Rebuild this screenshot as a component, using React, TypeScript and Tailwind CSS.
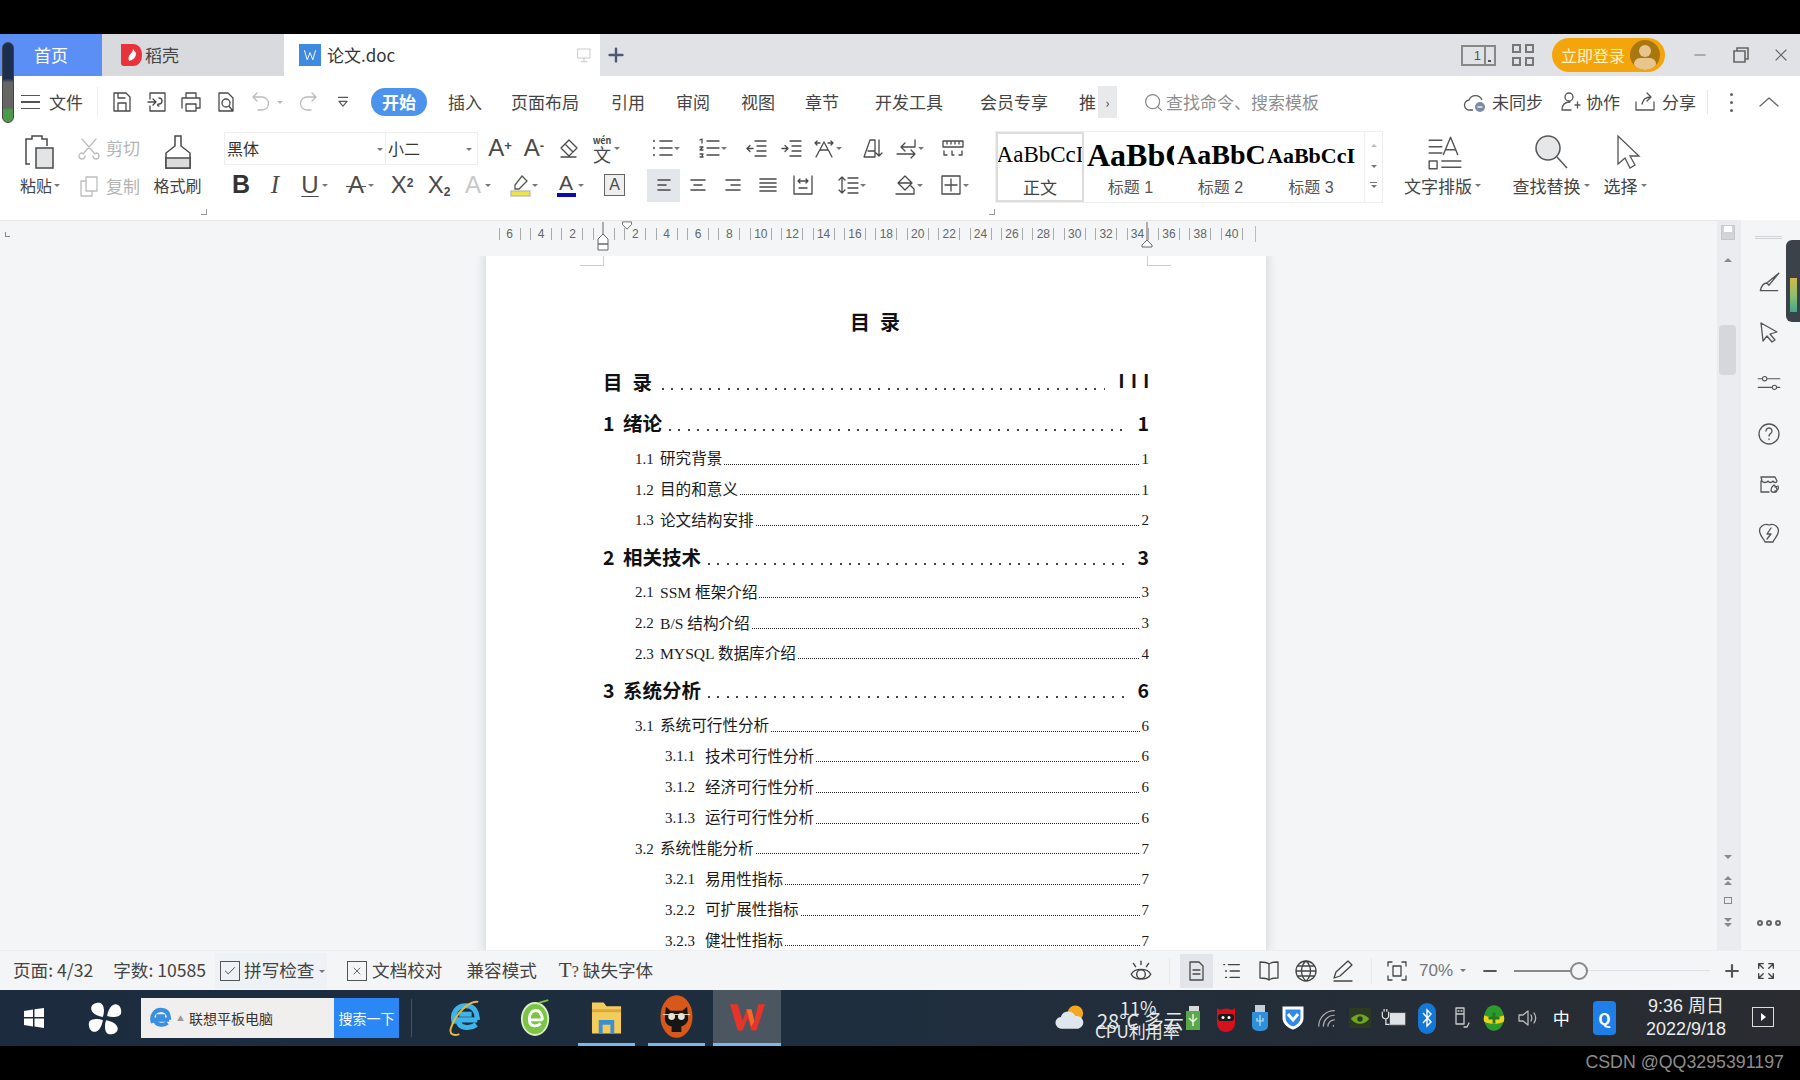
import React from 'react';
import { Check, Minus, Plus, Search, X } from 'lucide-react';

// generic thin stroke icon, 24 box unless sized by class
function Ic({ d, className = 'w-6 h-6 text-[#4a4a4a]', sw = 1.3, children }: { d?: string; className?: string; sw?: number; children?: React.ReactNode }) {
  return (
    <svg viewBox="0 0 24 24" fill="none" stroke="currentColor" strokeWidth={sw} strokeLinecap="round" strokeLinejoin="round" className={className}>
      {d && <path d={d} />}
      {children}
    </svg>
  );
}

function Caret({ className = '' }: { className?: string }) {
  return <span className={`absolute w-0 h-0 border-x-[3px] border-x-transparent border-t-[3px] border-t-[#777] ${className}`} />;
}

// 24px wide slot in a ribbon row
function Tool({ className = '', caret, children }: { className?: string; caret?: boolean; children: React.ReactNode }) {
  return (
    <div className={`relative w-6 h-8 shrink-0 flex items-center justify-center text-[#4a4a4a] ${className}`}>
      {children}
      {caret && <Caret className="-right-[6px] top-[15px]" />}
    </div>
  );
}

const menu = [
  ['插入', 'ml-[21px]'],
  ['页面布局', 'ml-[29px]'],
  ['引用', 'ml-[32px]'],
  ['审阅', 'ml-[31px]'],
  ['视图', 'ml-[31px]'],
  ['章节', 'ml-[30px]'],
  ['开发工具', 'ml-[36px]'],
  ['会员专享', 'ml-[37px]'],
];

const toc = [
  { l: 1, n: '1', t: '绪论', p: '1' },
  { l: 2, n: '1.1', t: '研究背景', p: '1' },
  { l: 2, n: '1.2', t: '目的和意义', p: '1' },
  { l: 2, n: '1.3', t: '论文结构安排', p: '2' },
  { l: 1, n: '2', t: '相关技术', p: '3' },
  { l: 2, n: '2.1', t: 'SSM 框架介绍', p: '3' },
  { l: 2, n: '2.2', t: 'B/S 结构介绍', p: '3' },
  { l: 2, n: '2.3', t: 'MYSQL 数据库介绍', p: '4' },
  { l: 1, n: '3', t: '系统分析', p: '6' },
  { l: 2, n: '3.1', t: '系统可行性分析', p: '6' },
  { l: 3, n: '3.1.1', t: '技术可行性分析', p: '6' },
  { l: 3, n: '3.1.2', t: '经济可行性分析', p: '6' },
  { l: 3, n: '3.1.3', t: '运行可行性分析', p: '6' },
  { l: 2, n: '3.2', t: '系统性能分析', p: '7' },
  { l: 3, n: '3.2.1', t: '易用性指标', p: '7' },
  { l: 3, n: '3.2.2', t: '可扩展性指标', p: '7' },
  { l: 3, n: '3.2.3', t: '健壮性指标', p: '7' },
];

const rulerNums = ['6', '4', '2', '', '2', '4', '6', '8', '10', '12', '14', '16', '18', '20', '22', '24', '26', '28', '30', '32', '34', '36', '38', '40'];

function TocRow({ l, n, t, p }: { l: number; n: string; t: string; p: string }) {
  if (l === 1) {
    return (
      <div className="h-[41.4px] flex items-center text-[19.5px] font-bold text-[#111]">
        <span className="w-[20px]">{n}</span>
        <span>{t}</span>
        <div className="flex-1 h-[2px] mt-[14px] mx-[7px] bg-[repeating-linear-gradient(90deg,#444_0_2px,transparent_2px_9.4px)]" />
        <span className="ml-[6px]">{p}</span>
      </div>
    );
  }
  return (
    <div className={`h-[30.7px] flex items-center text-[15.6px] text-[#1a1a1a] ${l === 2 ? 'pl-[32px]' : 'pl-[62px]'}`}>
      <span className={`font-['Liberation_Serif',serif] text-[15px] ${l === 2 ? 'w-[25px]' : 'w-[40px]'}`}>{n}</span>
      <span className="font-['Liberation_Serif','Noto_Sans_CJK_SC',serif]">{t}</span>
      <div className="flex-1 h-[1px] mt-[10px] mx-[2px] bg-[repeating-linear-gradient(90deg,#222_0_1px,transparent_1px_2px)]" />
      <span className="font-['Liberation_Serif',serif] text-[15px]">{p}</span>
    </div>
  );
}

function TabBar() {
  return (
    <div className="h-[42px] flex bg-[#e0e2e5] text-[17px]">
      <div className="w-[102px] flex items-center justify-center bg-[#5c8ff5] text-white">首页</div>
      <div className="w-[182px] flex items-center pl-[17px] bg-[#d8dadd] text-[#444]">
        <svg viewBox="0 0 24 24" className="w-[24px] h-[24px] mr-[2px]">
          <path d="M2 1h12c6 0 9 5 9 11s-3 11-9 11H5c-2 0-3-1-3-3z" fill="#e8333c" />
          <path d="M14 6c0 5-6 5-4 12 4-1 7-3 7-8z" fill="#fff" />
        </svg>
        稻壳
      </div>
      <div className="w-[316px] flex items-center pl-[15px] pr-[7px] bg-white text-[#333]">
        <div className="w-[22px] h-[22px] bg-[#3e8ae0] flex items-center justify-center mr-[6px]">
          <svg viewBox="0 0 20 20" className="w-4 h-4" fill="none" stroke="#fff" strokeWidth="1.2">
            <path d="M3 4l3.5 12L10 7l3.5 9L17 4" />
          </svg>
        </div>
        论文.doc
        <div className="ml-auto">
          <Ic className="w-[18px] h-[18px] text-[#c8c8c8]" d="M4 4h16v12H4zM12 16v5M8 21h8" />
        </div>
      </div>
      <Plus className="w-[22px] h-[22px] text-[#4c5a70] ml-[5px] mt-[10px]" strokeWidth={2.6} />
      <div className="ml-auto flex items-center">
        <div className="w-[35px] h-[21px] border-2 border-[#888] flex items-center justify-end pr-[1px] text-[13px] text-[#555] leading-none font-['Liberation_Sans',sans-serif]">
          1
          <span className="ml-[3px] w-[9px] h-[17px] border-l-2 border-[#888] flex items-end justify-center pb-[2px]">
            <span className="w-[3px] h-[2px] bg-[#555]" />
          </span>
        </div>
        <div className="ml-[16px] grid grid-cols-2 gap-[4px]">
          <span className="w-[9px] h-[9px] border-2 border-[#777]" />
          <span className="w-[9px] h-[9px] border-2 border-[#777]" />
          <span className="w-[9px] h-[9px] border-2 border-[#777]" />
          <span className="w-[9px] h-[9px] border-2 border-[#777]" />
        </div>
        <div className="ml-[18px] w-[113px] h-[34px] rounded-full bg-[#f5a50c] flex items-center pl-[9px] text-[#fff3c9] text-[16px]">
          立即登录
          <div className="ml-[5px] w-[30px] h-[30px] rounded-full bg-[#a8770f] overflow-hidden flex flex-col items-center">
            <span className="mt-[5px] w-[12px] h-[12px] rounded-full bg-[#e8c58c]" />
            <span className="mt-[1px] w-[22px] h-[12px] rounded-full bg-[#e8c58c]" />
          </div>
        </div>
        <Minus className="ml-[26px] w-[18px] h-[18px] text-[#777]" strokeWidth={1.4} />
        <svg viewBox="0 0 18 18" className="ml-[23px] w-[18px] h-[18px]" fill="none" stroke="#666" strokeWidth="1.6">
          <path d="M5 5V2h11v11h-3" />
          <path d="M2 5h11v11H2z" />
        </svg>
        <X className="ml-[21px] mr-[9px] w-[20px] h-[20px] text-[#666]" strokeWidth={1.4} />
      </div>
    </div>
  );
}

function MenuRow() {
  return (
    <div className="h-[52px] bg-white flex items-center text-[17px] text-[#444] pl-[21px]">
      <div className="flex flex-col gap-[5px] w-[19px]">
        <span className="h-[1.5px] bg-[#555]" />
        <span className="h-[1.5px] bg-[#555]" />
        <span className="h-[1.5px] bg-[#555]" />
      </div>
      <span className="ml-[9px]">文件</span>
      <span className="ml-[14px] w-px h-[30px] bg-[#eee]" />
      <Ic className="ml-[12px] w-6 h-6 text-[#4a4a4a]" d="M4 3h12l4 4v14H4zM8 21v-8h8v8M8 3v5h7" />
      <Ic className="ml-[11px] w-6 h-6 text-[#4a4a4a]" d="M5 9V3h15v18H5v-5M3 12h8M8 9l3 3-3 3M14 8a3 3 0 0 1 0 6c-2 0-2 2 0 2" />
      <Ic className="ml-[10px] w-6 h-6 text-[#4a4a4a]" d="M7 8V3h10v5M3 18V8h18v10h-4M7 14h10v7H7z" />
      <Ic className="ml-[11px] w-6 h-6 text-[#4a4a4a]" d="M5 3h9l5 5v13H5zM12 9a4 4 0 1 0 0 8 4 4 0 0 0 0-8M15 16l3 4" />
      <Ic className="ml-[11px] w-6 h-6 text-[#bbb]" d="M8 3L4 7l4 4M4 7h9a6 6 0 0 1 0 13H9" />
      <span className="ml-[4px] w-0 h-0 border-x-[3px] border-x-transparent border-t-[3px] border-t-[#bbb]" />
      <Ic className="ml-[13px] w-6 h-6 text-[#bbb]" d="M16 3l4 4-4 4M20 7h-9a6 6 0 0 0 0 13h4" />
      <Ic className="ml-[16px] w-[14px] h-[14px] text-[#555]" sw={2} d="M4 4h16M5 11l7 8 7-8z" />
      <span className="ml-[21px] w-[56px] h-[28px] rounded-full bg-[#4c93ee] text-white font-bold flex items-center justify-center">开始</span>
      {menu.map(([t, ml]) => (
        <span key={t} className={ml}>{t}</span>
      ))}
      <span className="ml-[31px] w-[19px] overflow-hidden whitespace-nowrap">推</span>
      <span className="w-[19px] h-[32px] bg-[#e8e9ea] flex items-center justify-center text-[13px] leading-none">›</span>
      <Search className="ml-[26px] w-[21px] h-[21px] text-[#888]" strokeWidth={1.4} />
      <span className="ml-[2px] text-[#8e8e8e]">查找命令、搜索模板</span>
      <div className="ml-auto flex items-center pr-[19px]">
        <svg viewBox="0 0 24 24" className="w-[24px] h-[24px]" fill="none" stroke="#555" strokeWidth="1.3">
          <path d="M10 20H7a5 5 0 0 1-1-10 7 7 0 0 1 13 0" />
          <circle cx="17" cy="17" r="5" fill="#7d8aa3" stroke="none" />
          <path d="M14.5 17h5" stroke="#fff" />
        </svg>
        <span className="ml-[5px]">未同步</span>
        <Ic className="ml-[15px] w-6 h-6 text-[#555]" d="M11 3a4 4 0 1 0 0 8 4 4 0 0 0 0-8M4 20c0-5 3-8 8-8M4 20h9M17 15h5M19.5 12v6" />
        <span className="ml-[4px]">协作</span>
        <Ic className="ml-[13px] w-6 h-6 text-[#555]" d="M3 12v8h18v-8M9 14c1-5 4-7 9-7M14 3l4 4-4 4" />
        <span className="ml-[5px]">分享</span>
        <span className="ml-[11px] w-px h-[24px] bg-[#e5e5e5]" />
        <div className="ml-[22px] flex flex-col gap-[5px]">
          <span className="w-[3px] h-[3px] rounded-full bg-[#666]" />
          <span className="w-[3px] h-[3px] rounded-full bg-[#666]" />
          <span className="w-[3px] h-[3px] rounded-full bg-[#666]" />
        </div>
        <Ic className="ml-[24px] w-[24px] h-[24px] text-[#666]" d="M3 16l9-8 9 8" />
      </div>
    </div>
  );
}

function Ribbon() {
  return (
    <div className="h-[92px] bg-white flex text-[#444] text-[17px] relative">
      {/* clipboard */}
      <div className="w-[75px] flex flex-col items-center pl-[5px]">
        <svg viewBox="0 0 32 36" className="w-[32px] h-[36px] mt-[6px]" fill="none" stroke="#4a4a4a" strokeWidth="1.5">
          <path d="M6 30H2V5h6V2h10v3h5v7" />
          <rect x="12" y="14" width="17" height="20" fill="#e3e4e6" />
        </svg>
        <span className="mt-[3px] text-[16px] relative pr-[8px] leading-[24px]">粘贴<Caret className="right-0 top-[11px]" /></span>
      </div>
      <div className="w-[75px] flex flex-col text-[#b4b4b4] text-[17px]">
        <div className="flex items-center mt-[4px] h-[32px] pl-[2px]">
          <Ic className="w-[24px] h-[24px] text-[#bdbdbd]" d="M5 3l13 15M19 3L6 18M5 17a3 3 0 1 0 3 3M19 17a3 3 0 1 1-3 3" />
          <span className="ml-[5px]">剪切</span>
        </div>
        <div className="flex items-center mt-[6px] h-[32px] pl-[2px]">
          <Ic className="w-[24px] h-[24px] text-[#bdbdbd]" d="M9 3h11v14H9zM9 7H4v15h11v-5" />
          <span className="ml-[5px]">复制</span>
        </div>
      </div>
      <div className="w-[55px] flex flex-col items-center relative">
        <svg viewBox="0 0 30 36" className="w-[30px] h-[36px] mt-[6px]" fill="none" stroke="#4a4a4a" strokeWidth="1.5">
          <path d="M12 2h6v10l9 7v15H3V19l9-7z" />
          <path d="M3 24h24v10H3z" fill="#dcdcdc" />
        </svg>
        <span className="mt-[3px] text-[16px] leading-[24px]">格式刷</span>
        <span className="absolute right-[-2px] bottom-[5px] w-[6px] h-[6px] border-r border-b border-[#999]" />
      </div>
      {/* font + paragraph */}
      <div className="ml-[19px] w-[770px] flex flex-col relative">
        <div className="flex h-[34px] mt-[3px] items-center">
          <div className="w-[162px] h-[33px] border border-[#eee] flex items-center pl-[2px] text-[16px] text-[#333] relative">
            黑体<Caret className="right-[2px] top-[15px]" />
          </div>
          <div className="w-[92px] h-[33px] border border-l-0 border-[#eee] flex items-center pl-[2px] text-[16px] text-[#333] relative">
            小二<Caret className="right-[5px] top-[15px]" />
          </div>
          <Tool className="ml-[10px] text-[24px] font-['Liberation_Sans',sans-serif]"><span>A<sup className="text-[13px] font-bold">+</sup></span></Tool>
          <Tool className="ml-[10px] text-[24px] font-['Liberation_Sans',sans-serif]"><span>A<sup className="text-[13px] font-bold">-</sup></span></Tool>
          <Tool className="ml-[10px]"><Ic d="M13 4l8 8-8 8-8-8zM9 8l8 8M5 21h15" /></Tool>
          <Tool className="ml-[10px]" caret><span className="flex flex-col items-center leading-none pt-[3px]"><span className="text-[9px] font-bold">wén</span><span className="text-[18px]">文</span></span></Tool>
          <Tool className="ml-[36px]" caret><Ic d="M10 5h12M10 12h12M10 19h12M4 4.5v1M4 11.5v1M4 18.5v1" sw={1.6} /></Tool>
          <Tool className="ml-[23px]" caret><Ic d="M10 5h12M10 12h12M10 19h12M3 4l2-1v4M3 11h3l-3 3h3M3 18h3l-1 2 1 1H3" sw={1.3} /></Tool>
          <Tool className="ml-[24px]"><Ic d="M10 5h11M12 10h9M12 15h9M10 20h11M8 12.5H2M5 9.5l-3 3 3 3" /></Tool>
          <Tool className="ml-[11px]"><Ic d="M10 5h11M12 10h9M12 15h9M10 20h11M2 12.5h6M5 9.5l3 3-3 3" /></Tool>
          <Tool className="ml-[8px]" caret><Ic d="M12 6L4 21M12 6l8 15M8 14h8M3 7h5M3 7l2-2M3 7l2 2M21 7h-5M21 7l-2-2M21 7l-2 2" /></Tool>
          <Tool className="ml-[24px]"><Ic d="M10 4L4 21h11V4zM8 15h7M19 4v16M16 17l3 3 3-3" /></Tool>
          <Tool className="ml-[10px]" caret><Ic d="M21 4v7H7M11 7l-4 4 4 4M3 18h18M17 14l4 4-4 4" /></Tool>
          <Tool className="ml-[23px]"><Ic d="M2 5h20v6H2zM6 5v3M10 5v3M14 5v3M18 5v3M3 15v4h3M21 15v4h-3M11 15v4h2" /></Tool>
        </div>
        <div className="flex h-[34px] mt-[3px] items-center">
          <Tool className="ml-[5px] font-['Liberation_Sans',sans-serif] font-bold text-[25px] text-[#333]">B</Tool>
          <Tool className="ml-[10px] font-['Liberation_Serif',serif] italic text-[25px]">I</Tool>
          <Tool className="ml-[11px] font-['Liberation_Sans',sans-serif] text-[24px]" caret><span className="underline underline-offset-[3px] decoration-1">U</span></Tool>
          <Tool className="ml-[22px] font-['Liberation_Sans',sans-serif] text-[24px] font-light" caret>
            <span className="relative">A<span className="absolute left-[-2px] right-[-2px] top-[19px] h-px bg-[#555]" /></span>
          </Tool>
          <Tool className="ml-[22px] font-['Liberation_Sans',sans-serif] text-[24px]"><span>X<sup className="text-[12px] font-bold">2</sup></span></Tool>
          <Tool className="ml-[13px] font-['Liberation_Sans',sans-serif] text-[24px]"><span>X<sub className="text-[12px] font-bold">2</sub></span></Tool>
          <Tool className="ml-[10px] font-['Liberation_Sans',sans-serif] text-[24px] text-[#c8c8c8]" caret>A</Tool>
          <Tool className="ml-[23px]" caret>
            <svg viewBox="0 0 24 24" className="w-6 h-6" fill="none" stroke="#555" strokeWidth="1.3">
              <path d="M14 3l5 5-8 8H7v-4z" />
              <rect x="3" y="18" width="19" height="5" fill="#f0e34a" stroke="#bbb" />
            </svg>
          </Tool>
          <Tool className="ml-[22px]" caret>
            <span className="flex flex-col items-center leading-none">
              <span className="text-[21px] font-['Liberation_Sans',sans-serif] leading-[20px]">A</span>
              <span className="w-[19px] h-[4px] bg-[#0a0ab0]" />
            </span>
          </Tool>
          <Tool className="ml-[26px] border border-[#666] !w-[21px] !h-[22px] font-['Liberation_Sans',sans-serif] text-[16px] bg-[#eee]">A</Tool>
          <Tool className="ml-[22px] !w-[33px] !h-[33px] bg-[#e3e6ea]"><Ic d="M6 7h12M6 12h8M6 17h12" sw={1.6} /></Tool>
          <Tool className="ml-[6px]"><Ic d="M5 7h14M8 12h8M5 17h14" sw={1.6} /></Tool>
          <Tool className="ml-[11px]"><Ic d="M5 7h14M10 12h9M5 17h14" sw={1.6} /></Tool>
          <Tool className="ml-[11px]"><Ic d="M4 6h16M4 10h16M4 14h16M4 18h16" sw={1.6} /></Tool>
          <Tool className="ml-[11px]"><Ic d="M3 3v18M21 3v18M3 21h18M7 8h10M7 8l2-2M7 8l2 2M17 8l-2-2M17 8l-2 2M8 15h8" /></Tool>
          <Tool className="ml-[21px]" caret><Ic d="M6 4v16M3 7l3-3 3 3M3 17l3 3 3-3M12 5h10M12 10h10M12 15h10M12 20h10" /></Tool>
          <Tool className="ml-[33px]" caret><Ic d="M12 3l7 7-7 7-7-7zM3 21h18v-5l-3-3M5 10l14 0" /></Tool>
          <Tool className="ml-[22px]" caret><Ic d="M3 3h18v18H3zM12 6v12M6 12h12" /></Tool>
        </div>
        <span className="absolute right-[-1px] bottom-[5px] w-[6px] h-[6px] border-r border-b border-[#999]" />
      </div>
      {/* style gallery */}
      <div className="ml-[1px] w-[388px] h-[72px] mt-[3px] border border-[#eee] flex font-['Liberation_Serif','Noto_Sans_CJK_SC',serif] text-black">
        <div className="w-[88px] h-[70px] border-2 border-[#ddd] flex flex-col items-center overflow-hidden">
          <span className="h-[42px] flex items-center text-[23px] whitespace-nowrap">AaBbCcI</span>
          <span className="text-[17px] text-[#444] font-['Noto_Sans_CJK_SC',sans-serif] leading-[22px]">正文</span>
        </div>
        <div className="ml-[3px] w-[87px] flex flex-col overflow-hidden">
          <span className="h-[46px] flex items-center text-[32px] font-bold whitespace-nowrap">AaBbCc</span>
          <span className="text-center text-[16px] text-[#555] font-['Liberation_Sans','Noto_Sans_CJK_SC',sans-serif] leading-[20px]">标题 1</span>
        </div>
        <div className="ml-[3px] w-[87px] flex flex-col overflow-hidden">
          <span className="h-[46px] flex items-center text-[28px] font-bold whitespace-nowrap">AaBbCc</span>
          <span className="text-center text-[16px] text-[#555] font-['Liberation_Sans','Noto_Sans_CJK_SC',sans-serif] leading-[20px]">标题 2</span>
        </div>
        <div className="ml-[3px] w-[88px] flex flex-col overflow-hidden">
          <span className="h-[46px] flex items-center text-[22px] font-bold whitespace-nowrap">AaBbCcI</span>
          <span className="text-center text-[16px] text-[#555] font-['Liberation_Sans','Noto_Sans_CJK_SC',sans-serif] leading-[20px]">标题 3</span>
        </div>
        <div className="ml-auto w-[18px] border-l border-[#f0f0f0] flex flex-col items-center">
          <span className="mt-[12px] w-0 h-0 border-x-[3px] border-x-transparent border-b-[3px] border-b-[#bbb]" />
          <span className="mt-[18px] w-0 h-0 border-x-[3px] border-x-transparent border-t-[3px] border-t-[#777]" />
          <span className="mt-[14px] w-[7px] border-t border-[#777]" />
          <span className="mt-[2px] w-0 h-0 border-x-[3px] border-x-transparent border-t-[3px] border-t-[#777]" />
        </div>
      </div>
      {/* big buttons */}
      <div className="w-[110px] ml-[9px] pr-[9px] flex flex-col items-center">
        <Ic className="mt-[6px] ml-[5px] w-[38px] h-[38px] text-[#555]" sw={0.9} d="M2 4h8M2 8h8M2 12h8M11 13L15.5 2 20 13M12.5 10h6M2 17h5v5H2zM10 17h12M10 21h12" />
        <span className="mt-[2px] relative pr-[9px] leading-[24px]">文字排版<Caret className="right-0 top-[10px]" /></span>
      </div>
      <div className="w-[98px] flex flex-col items-center">
        <svg viewBox="0 0 36 36" className="mt-[6px] w-[36px] h-[36px]" fill="none" stroke="#555" strokeWidth="1.5">
          <circle cx="15" cy="14" r="12" fill="#e6e7e9" />
          <path d="M24 23l10 11" />
        </svg>
        <span className="mt-[4px] relative pr-[9px] leading-[24px]">查找替换<Caret className="right-0 top-[10px]" /></span>
      </div>
      <div className="w-[50px] flex flex-col items-center">
        <svg viewBox="0 0 30 36" className="mt-[6px] ml-[6px] w-[30px] h-[36px]" fill="none" stroke="#555" strokeWidth="1.3">
          <path d="M5 2v28l7-6 5 10 5-3-5-9h9z" />
        </svg>
        <span className="mt-[4px] relative pr-[9px] leading-[24px]">选择<Caret className="right-0 top-[10px]" /></span>
      </div>
    </div>
  );
}

function Ruler() {
  return (
    <div className="h-[36px] bg-[#f3f5f7] border-t border-[#e4e6e8] flex items-start pt-[5px] relative">
      <span className="absolute left-[5px] top-[11px] w-[5px] h-[5px] border-l border-b border-[#888]" />
      <div className="ml-[494px] flex font-['Liberation_Sans',sans-serif] text-[12px] text-[#666]">
        {rulerNums.map((n, i) => (
          <div key={i} className="w-[31.4px] h-[16px] flex items-center justify-center gap-[3px] leading-none">
            <span className="w-px h-[12px] bg-[#aaa]" />
            <span className="w-[14px] text-center">{n}</span>
            <span className="w-px h-[12px] bg-[#aaa]" />
          </div>
        ))}
        <span className="ml-[8px] w-px h-[16px] bg-[#bbb]" />
      </div>
      <svg viewBox="0 0 12 28" className="absolute left-[597px] top-0 w-[12px] h-[30px]" fill="#fff" stroke="#666" strokeWidth="1">
        <path d="M6 0v12M1 17l5-5 5 5v5H1zM1 22h10v6H1z" />
      </svg>
      <svg viewBox="0 0 12 10" className="absolute left-[621px] top-0 w-[12px] h-[9px]" fill="#fff" stroke="#666" strokeWidth="1">
        <path d="M1 1h10v3l-5 5-5-5z" />
      </svg>
      <svg viewBox="0 0 12 26" className="absolute left-[1141px] top-0 w-[12px] h-[28px]" fill="#fff" stroke="#666" strokeWidth="1">
        <path d="M6 0v18M1 23l5-5 5 5v2H1z" />
      </svg>
    </div>
  );
}

function Page() {
  return (
    <div className="flex-1 bg-[#f3f5f7] pl-[486px] overflow-hidden">
      <div className="w-[780px] h-[694px] bg-white shadow-[0_0_8px_3px_#dcdddf] relative overflow-hidden pt-[50px] px-[117px]">
        <span className="absolute left-[94px] top-0 w-[24px] h-[10px] border-r border-b border-[#ccc]" />
        <span className="absolute right-[95px] top-0 w-[24px] h-[10px] border-l border-b border-[#ccc]" />
        <div className="text-center text-[20px] font-bold text-[#111] tracking-[10px] leading-[32px] pl-[8px]">目录</div>
        <div className="mt-[23px]">
          <div className="h-[41.4px] flex items-center text-[19.5px] font-bold text-[#111]">
            <span className="tracking-[10px]">目录</span>
            <div className="flex-1 h-[2px] mt-[14px] mr-[14px] bg-[repeating-linear-gradient(90deg,#444_0_2px,transparent_2px_9.4px)]" />
            <span className="tracking-[7px] mr-[-7px] font-['Liberation_Sans',sans-serif]">III</span>
          </div>
          {toc.map(r => (
            <TocRow key={r.n} {...r} />
          ))}
        </div>
      </div>
    </div>
  );
}

function ScrollCol() {
  return (
    <div className="w-[23px] bg-[#eaecef] flex flex-col items-center pr-[2px]">
      <div className="mt-[5px] w-[14px] h-[15px] bg-[#d2d4d8] border border-[#c5c7cb] flex items-start justify-center">
        <span className="w-[8px] h-[6px] bg-white" />
      </div>
      <span className="mt-[18px] w-0 h-0 border-x-[4px] border-x-transparent border-b-[4px] border-b-[#888]" />
      <div className="mt-[63px] w-[17px] h-[50px] rounded-[4px] bg-[#d5d7da]" />
      <span className="mt-[480px] w-0 h-0 border-x-[4px] border-x-transparent border-t-[4px] border-t-[#888]" />
      <span className="mt-[17px] w-0 h-0 border-x-[4px] border-x-transparent border-b-[4px] border-b-[#888]" />
      <span className="mt-[1px] w-0 h-0 border-x-[4px] border-x-transparent border-b-[4px] border-b-[#888]" />
      <span className="mt-[12px] w-[8px] h-[7px] border border-[#888]" />
      <span className="mt-[14px] w-0 h-0 border-x-[4px] border-x-transparent border-t-[4px] border-t-[#888]" />
      <span className="mt-[1px] w-0 h-0 border-x-[4px] border-x-transparent border-t-[4px] border-t-[#888]" />
    </div>
  );
}

function SideCol() {
  return (
    <div className="w-[60px] bg-[#f3f5f7] border-l border-[#e8eaec] flex flex-col items-center pr-[4px] text-[#555] relative">
      <div className="mt-[16px] w-[27px] border-t border-b border-[#d0d2d5] h-[3px]" />
      <Ic className="mt-[31px] w-[26px] h-[26px]" d="M21 3L10 12l2 2L21 3zM10 12c-3 0-5 3-6 7h16" />
      <Ic className="mt-[24px] w-[24px] h-[24px]" d="M4 3l16 9-7 2 5 6-3 2-5-6-4 5z" />
      <Ic className="mt-[26px] w-[26px] h-[26px]" d="M2 8h4a2 2 0 1 0 4 0 2 2 0 1 0-4 0M10 8h12M2 16h13M15 16a2 2 0 1 0 4 0 2 2 0 1 0-4 0M19 16h3" sw={1} />
      <Ic className="mt-[26px] w-[24px] h-[24px]" d="M12 2a10 10 0 1 0 0 20 10 10 0 0 0 0-20M9 9a3 3 0 1 1 4.5 2.6c-1 .6-1.5 1.2-1.5 2.4M12 17v.5" />
      <Ic className="mt-[26px] w-[24px] h-[24px]" d="M4 5h14l2 4c0 2-3 2-4 0-1 2-4 2-5 0-1 2-5 2-6 0zM4 9v11h8M14 18c0-3 2-4 3-5 1 1 3 2 3 5s-6 3-6 0zM18 15l3-1c1 2 0 5-3 5" />
      <Ic className="mt-[26px] w-[24px] h-[24px]" d="M12 3c5-2 11 2 9 8-1 4-4 6-5 9H8c-1-3-4-5-5-9C1 5 7 1 12 3zM14 6l-4 6h4l-4 5" />
      <div className="mt-auto mb-[24px] flex gap-[3px]">
        <span className="w-[6px] h-[6px] rounded-full border-2 border-[#666]" />
        <span className="w-[6px] h-[6px] rounded-full border-2 border-[#666]" />
        <span className="w-[6px] h-[6px] rounded-full border-2 border-[#666]" />
      </div>
    </div>
  );
}

function StatusBar() {
  return (
    <div className="h-[40px] bg-[#f3f5f7] flex items-center text-[#444] text-[17.6px] pl-[13px] border-t border-[#eceef0]">
      <span>页面: 4/32</span>
      <span className="ml-[20px]">字数: 10585</span>
      <div className="ml-[9px] w-[112px] h-[36px] pl-[5px] bg-[#eef2f7] flex items-center relative">
        <div className="w-[20px] h-[20px] border border-[#555] flex items-center justify-center">
          <Check className="w-[14px] h-[14px]" strokeWidth={1.6} />
        </div>
        <span className="ml-[4px]">拼写检查</span>
        <Caret className="right-[2px] top-[17px]" />
      </div>
      <div className="ml-[20px] w-[20px] h-[20px] border border-[#555] flex items-center justify-center">
        <X className="w-[12px] h-[12px]" strokeWidth={1.6} />
      </div>
      <span className="ml-[5px]">文档校对</span>
      <span className="ml-[24px]">兼容模式</span>
      <span className="ml-[22px] font-['Liberation_Serif','Noto_Sans_CJK_SC',serif] text-[21px]">T<span className="text-[16px]">?</span></span>
      <span className="ml-[4px]">缺失字体</span>
      <div className="ml-auto flex items-center pr-[23px] text-[17px]">
        <Ic className="w-[26px] h-[26px]" d="M3 15c3-6 15-6 18 0-3 6-15 6-18 0M12 11a4 4 0 1 0 0 8 4 4 0 0 0 0-8M12 3v3M5 5l2 3M19 5l-2 3" />
        <span className="ml-[15px] w-[1px] h-[26px] bg-[#e8e8e8]" />
        <div className="ml-[10px] w-[33px] h-[34px] bg-[#e2e5e9] flex items-center justify-center">
          <Ic d="M6 3h9l4 4v14H6zM9 11h7M9 15h7" />
        </div>
        <Ic className="ml-[8px] w-[22px] h-[22px]" d="M3 5h1M8 5h12M5 12h1M10 12h10M5 19h1M10 19h10" sw={1.5} />
        <Ic className="ml-[14px] w-[24px] h-[24px]" d="M12 5c-2-2-6-2-9-2v16c3 0 7 0 9 2 2-2 6-2 9-2V3c-3 0-7 0-9 2M12 5v16" />
        <Ic className="ml-[13px] w-[24px] h-[24px]" d="M12 2a10 10 0 1 0 0 20 10 10 0 0 0 0-20M2 12h20M12 2c-6 5-6 15 0 20M12 2c6 5 6 15 0 20M4 7h16M4 17h16" />
        <Ic className="ml-[13px] w-[24px] h-[24px]" d="M17 2l4 4-12 11-6 2 2-6zM3 22h18" />
        <span className="ml-[16px] w-[1px] h-[26px] bg-[#e8e8e8]" />
        <Ic className="ml-[13px] w-[24px] h-[24px]" d="M3 7V3h4M17 3h4v4M21 17v4h-4M7 21H3v-4M8 7h8v10H8z" />
        <span className="ml-[10px] text-[#777] relative pr-[13px] font-['Liberation_Sans',sans-serif]">70%<Caret className="right-0 top-[11px]" /></span>
        <Minus className="ml-[14px] w-[20px] h-[20px] text-[#555]" strokeWidth={2.6} />
        <div className="ml-[14px] w-[196px] h-[20px] flex items-center relative">
          <span className="w-[56px] h-[2px] bg-[#888]" />
          <span className="w-[18px] h-[18px] rounded-full border-2 border-[#888] bg-[#f3f5f7] shrink-0" />
          <span className="flex-1 h-px bg-[#dfe1e4]" />
        </div>
        <Plus className="ml-[12px] w-[20px] h-[20px] text-[#555]" strokeWidth={2.6} />
        <Ic className="ml-[13px] w-[22px] h-[22px]" d="M9 4H4v5M4 4l5 5M15 4h5v5M20 4l-5 5M4 15v5h5M4 20l5-5M20 15v5h-5M20 20l-5-5" sw={1.5} />
      </div>
    </div>
  );
}

function Taskbar() {
  const slot = 'w-[57px] h-full flex items-center justify-center';
  return (
    <div className="h-[56px] bg-[linear-gradient(90deg,#1c2c3e,#1f2e3e_50%,#2a2c30)] flex items-center text-white relative">
      <svg viewBox="0 0 24 24" className="ml-[22px] w-[24px] h-[24px]" fill="#fff">
        <path d="M2 5l9-1.5V11H2zM12.5 3.2L22 2v9h-9.500zM2 12.500h9v8L2 19zM12.500 12.500H22V22l-9.500-1.500z" />
      </svg>
      <svg viewBox="0 0 32 32" className="ml-[42px] w-[34px] h-[34px]" fill="#fff">
        <path d="M14 15C8 14 3 11 3 7s5-6 9-5c3 1 4 8 2 13zM18 14c1-6 4-11 8-11s6 5 5 9c-1 3-8 4-13 2zM17 18c6 1 11 4 11 8s-5 6-9 5c-3-1-4-8-2-13zM14 18c-1 6-4 11-8 11s-6-5-5-9c1-3 8-4 13-2z" />
      </svg>
      <div className="ml-[19px] w-[258px] h-[40px] flex text-[14px] text-[#333] bg-[#f0efee]">
        <div className="flex-1 flex items-center pl-[7px]">
          <svg viewBox="0 0 32 32" className="w-[26px] h-[30px]" fill="none">
            <path d="M26 18H9c0 7 9 8 15 4M6 22C3 12 9 6 16 6s10 5 10 12M10 14h11" stroke="#3b8fe0" strokeWidth="5" />
          </svg>
          <span className="ml-[3px] text-[7px] text-[#999]">▲</span>
          <span className="ml-[5px]">联想平板电脑</span>
        </div>
        <div className="w-[65px] bg-[#2a87f5] text-white flex items-center justify-center">搜索一下</div>
      </div>
      <span className="ml-[12px] w-px h-[38px] bg-[#44505c]" />
      <div className={`ml-[24px] ${slot}`}>
        <svg viewBox="0 0 36 40" className="w-[34px] h-[38px]" fill="none">
          <path d="M31 22H11c0 9 12 10 19 5M7 26C3 13 11 7 19 7s12 6 12 15M12 16h13" stroke="#3fb4e8" strokeWidth="5.500" />
          <path d="M32 3C24 1 8 14 3 31c-2 7 4 8 9 6" stroke="#e8b93a" strokeWidth="2" />
        </svg>
      </div>
      <div className={`ml-[14px] ${slot}`}>
        <svg viewBox="0 0 34 40" className="w-[32px] h-[40px]" fill="none">
          <ellipse cx="16" cy="21" rx="14" ry="17" fill="#7cc445" stroke="#d8efc6" strokeWidth="2" />
          <path d="M24 22H10c0 7 7 8 12 4M10 21c0-7 4-9 7-9s6 2 7 10" stroke="#fff" strokeWidth="3" />
          <path d="M20 4l10-3" stroke="#7cc445" strokeWidth="2" />
        </svg>
      </div>
      <div className={`ml-[14px] ${slot} border-b-[3px] border-b-[#76b9ed]`}>
        <svg viewBox="0 0 32 36" className="w-[31px] h-[36px]">
          <path d="M1 3h12l3 4h15v28H1z" fill="#f4cc5c" />
          <path d="M1 10h30v3H1z" fill="#d9a93a" />
          <path d="M8 35V21h16v14h-4v-9h-8v9z" fill="#3f8fd0" />
        </svg>
      </div>
      <div className={`ml-[13px] ${slot} border-b-[3px] border-b-[#76b9ed]`}>
        <svg viewBox="0 0 34 46" className="w-[33px] h-[45px]">
          <ellipse cx="17" cy="23" rx="16.500" ry="22" fill="#d8581a" />
          <path d="M6 13l5 4h12l5-4 1 12c0 5-5 8-7 8v6h-10v-6c-3 0-7-3-7-8z" fill="#161616" />
          <circle cx="12" cy="23" r="3.500" fill="#e8e0d0" />
          <circle cx="22" cy="23" r="3.500" fill="#e8e0d0" />
          <path d="M3 21h28" stroke="#e8e0d0" strokeWidth="1" />
        </svg>
      </div>
      <div className="ml-[8px] w-[68px] h-full bg-[#4b5661] flex items-center justify-center border-b-[3px] border-b-[#76b9ed]">
        <svg viewBox="0 0 36 30" className="w-[35px] h-[30px]">
          <path d="M0 2h8l5 17L17 7h5l3 12 4-17h7l-9 27h-5l-4-13-5 13h-5z" fill="#e8332a" />
          <path d="M17 7h5l3 12-3 6z" fill="#f2692a" />
        </svg>
      </div>
      {/* weather text runs over the tray in the picture */}
      <svg viewBox="0 0 32 28" className="absolute left-[1055px] top-[13px] w-[31px] h-[30px]">
        <circle cx="21" cy="9" r="8" fill="#f4a71f" />
        <path d="M7 25a6 6 0 0 1-1-12 8 8 0 0 1 15-1 6 6 0 0 1 3 13z" fill="#dfe6ee" />
      </svg>
      <div className="absolute left-[1176px] top-0 h-full flex items-center">
        <Tray>
          <svg viewBox="0 0 20 26" className="w-[20px] h-[26px]">
            <rect x="6" y="1" width="10" height="5" fill="#d8d8d8" />
            <rect x="3" y="6" width="14" height="19" fill="#58a94a" />
            <path d="M10 9v12M6 13l4 4 4-4" stroke="#e8f5e0" strokeWidth="1.500" fill="none" />
          </svg>
        </Tray>
        <Tray>
          <svg viewBox="0 0 24 30" className="w-[24px] h-[30px]">
            <path d="M3 5l3 2c4-2 8-2 12 0l3-2v15c0 5-4 9-9 9s-9-4-9-9z" fill="#d5121c" />
            <rect x="4" y="11" width="16" height="7" rx="3" fill="#1a1a1a" />
            <circle cx="9" cy="14.500" r="1.500" fill="#fff" />
            <circle cx="15" cy="14.500" r="1.500" fill="#fff" />
          </svg>
        </Tray>
        <Tray>
          <svg viewBox="0 0 20 28" className="w-[20px] h-[28px]">
            <rect x="5" y="1" width="10" height="8" fill="#c9ced4" />
            <path d="M2 8h16v14c0 3-3 5-8 5s-8-2-8-5z" fill="#2f8fd8" />
            <path d="M10 11v11M7 14v3h6v-3" stroke="#bfe0f7" strokeWidth="1.200" fill="none" />
          </svg>
        </Tray>
        <Tray>
          <svg viewBox="0 0 24 26" className="w-[24px] h-[26px]" fill="none" stroke="#fff" strokeWidth="3">
            <path d="M3 3h18v10c0 5-5 9-9 10-4-1-9-5-9-10z" fill="#2e8ae6" stroke="#fff" />
            <path d="M7 9l5 6 5-6" stroke="#fff" />
          </svg>
        </Tray>
        <Tray><Ic className="w-[22px] h-[22px] text-[#aaa]" d="M3 21a17 17 0 0 1 17-17M8 21A12 12 0 0 1 20 9M13 21a7 7 0 0 1 7-7M19 20v1" /></Tray>
        <Tray>
          <svg viewBox="0 0 24 22" className="w-[22px] h-[20px]">
            <rect x="0" y="0" width="24" height="22" fill="#2c3a22" />
            <path d="M2 12c5-7 15-7 20 0-5 7-15 7-20 0z" fill="#6fa821" />
            <circle cx="12" cy="12" r="3" fill="#2c3a22" />
          </svg>
        </Tray>
        <Tray>
          <svg viewBox="0 0 28 20" className="w-[26px] h-[18px]" fill="none">
            <rect x="9" y="4" width="18" height="14" fill="#dfe2e6" stroke="#444" />
            <path d="M1 3v5c0 2 3 3 4 3s3-1 3-3V3M3 0v3M6 0v3M5 11v6h4" stroke="#e8e8e8" strokeWidth="1.300" />
          </svg>
        </Tray>
        <Tray>
          <span className="w-[18px] h-[31px] rounded-full bg-[#1478d4] flex items-center justify-center">
            <svg viewBox="0 0 10 20" className="w-[10px] h-[20px]" fill="none" stroke="#fff" strokeWidth="1.4"><path d="M1 5l8 9-4 4V2l4 4-8 9" /></svg>
          </span>
        </Tray>
        <Tray><Ic className="w-[24px] h-[30px] text-[#ccc]" d="M7 2h8v16H7zM9 5h1M12 5h1M7 8h8M15 21h3l2-4" /></Tray>
        <Tray>
          <svg viewBox="0 0 24 30" className="w-[22px] h-[30px]">
            <ellipse cx="12" cy="15" rx="11" ry="14" fill="#2c9a2e" />
            <path d="M1.500 12c6 3 15 3 21 0 1 3 1 5 0 7-6 3-15 3-21 0-1-2-1-4 0-7z" fill="#ecd21a" />
            <path d="M12 9v12M6 15h12" stroke="#1e7a22" strokeWidth="3" />
          </svg>
        </Tray>
        <Tray><Ic className="w-[24px] h-[24px] text-[#bbb]" d="M3 9v6h4l5 4V5L7 9zM15 9c1 2 1 4 0 6M18 7c2 3 2 7 0 10" /></Tray>
        <Tray><span className="text-[17px]">中</span></Tray>
        <div className="ml-[15px] w-[23px] h-[34px] rounded-[4px] bg-[#1f7fe8] flex items-center justify-center font-bold text-[16px]">Q</div>
      </div>
      <span className="absolute left-[1097px] top-[18px] text-[20px] leading-[26px] text-[#e8e8e8]">28°C 多云</span>
      <span className="absolute left-[1120px] top-[5px] text-[18px] leading-[24px] text-[#e8e8e8]">11%</span>
      <span className="absolute left-[1095px] top-[29px] text-[17px] leading-[24px] text-[#e8e8e8]">CPU利用率</span>
      <div className="ml-auto mr-[69px] w-[90px] text-[18px] leading-[23px] text-center text-[#ececec] font-['Liberation_Sans','Noto_Sans_CJK_SC',sans-serif]">
        <div>9:36 周日</div>
        <div>2022/9/18</div>
      </div>
      <div className="absolute right-[26px] top-[17px] w-[22px] h-[20px] border border-[#ddd] flex items-center justify-center">
        <span className="w-0 h-0 border-y-[4px] border-y-transparent border-l-[5px] border-l-white" />
      </div>
    </div>
  );
}

function Tray({ children }: { children: React.ReactNode }) {
  return <div className="w-[33.5px] flex items-center justify-center">{children}</div>;
}

export default function App() {
  return (
    <div className="relative w-[1800px] h-[1080px] bg-black overflow-hidden flex flex-col font-['Noto_Sans_CJK_SC','Liberation_Sans',sans-serif]">
      <div className="h-[34px]" />
      <TabBar />
      <MenuRow />
      <Ribbon />
      <div className="flex h-[730px]">
        <div className="w-[1717px] flex flex-col">
          <Ruler />
          <Page />
        </div>
        <ScrollCol />
        <SideCol />
      </div>
      <StatusBar />
      <Taskbar />
      <div className="flex-1 flex items-center justify-end pr-[16px] pb-[2px] text-[17.8px] text-[#8c8c8c] font-['Liberation_Sans',sans-serif]">CSDN @QQ3295391197</div>

      {/* floating meters from a desktop widget */}
      <div className="absolute left-[2px] top-[42px] w-[12px] h-[81px] rounded-full overflow-hidden border border-[#444] bg-[linear-gradient(180deg,#1c2f50_0,#1c2f50_45%,#666_50%,#666_82%,#4c9a4c_85%,#4c9a4c_100%)]" />
      <div className="absolute right-0 top-[240px] w-[14px] h-[82px] rounded-l-[6px] bg-[#3c4249] flex justify-center items-end pb-[10px]">
        <span className="w-[7px] h-[34px] bg-[linear-gradient(180deg,#d2b64c,#8fbf6a,#3fa890)]" />
      </div>
    </div>
  );
}
